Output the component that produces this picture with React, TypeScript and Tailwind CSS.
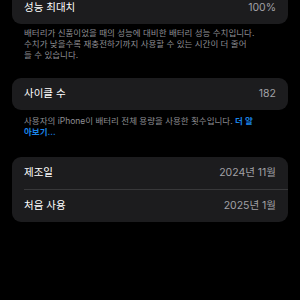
import React from "react";

const font = { fontFamily: '"Inter", "Noto Sans CJK KR", sans-serif' };

function Row({ label, value }: { label: string; value: string }) {
  return (
    <div className="flex h-[32px] items-center justify-between px-[12px]">
      <span className="text-[10.5px] text-white">{label}</span>
      <span className="text-[10.5px] text-[#a1a1a6]">{value}</span>
    </div>
  );
}

export default function App() {
  return (
    <div
      className="h-[300px] w-[300px] overflow-hidden bg-black px-[12px]"
      style={font}
    >
      <div className="-mt-[9px] rounded-[9px] bg-[#1c1c1e]">
        <div className="flex h-[33px] items-center justify-between px-[12px]">
          <span className="text-[10.5px] text-white">성능 최대치</span>
          <span className="text-[10.5px] text-[#a1a1a6]">100%</span>
        </div>
      </div>
      <div className="px-[12px] pt-[4px] text-[8.5px] leading-[11px] text-[#8e8e93]">
        <div className="whitespace-nowrap">배터리가 신품이었을 때의 성능에 대비한 배터리 성능 수치입니다.</div>
        <div className="whitespace-nowrap">수치가 낮을수록 재충전하기까지 사용할 수 있는 시간이 더 줄어</div>
        <div className="whitespace-nowrap">들 수 있습니다.</div>
      </div>
      <div className="mt-[17px] rounded-[9px] bg-[#1c1c1e]">
        <Row label="사이클 수" value="182" />
      </div>
      <div className="px-[12px] pt-[6px] text-[8.5px] leading-[11px] text-[#8e8e93]">
        <div className="whitespace-nowrap">
          사용자의 iPhone이 배터리 전체 용량을 사용한 횟수입니다.{" "}
          <span className="font-semibold text-[#1a84e8]">더 알</span>
        </div>
        <div className="whitespace-nowrap font-semibold text-[#1a84e8]">아보기...</div>
      </div>
      <div className="mt-[19px] rounded-[9px] bg-[#1c1c1e]">
        <Row label="제조일" value="2024년 11월" />
        <div className="ml-[12px] h-px bg-[#38383a]" />
        <Row label="처음 사용" value="2025년 1월" />
      </div>
    </div>
  );
}
